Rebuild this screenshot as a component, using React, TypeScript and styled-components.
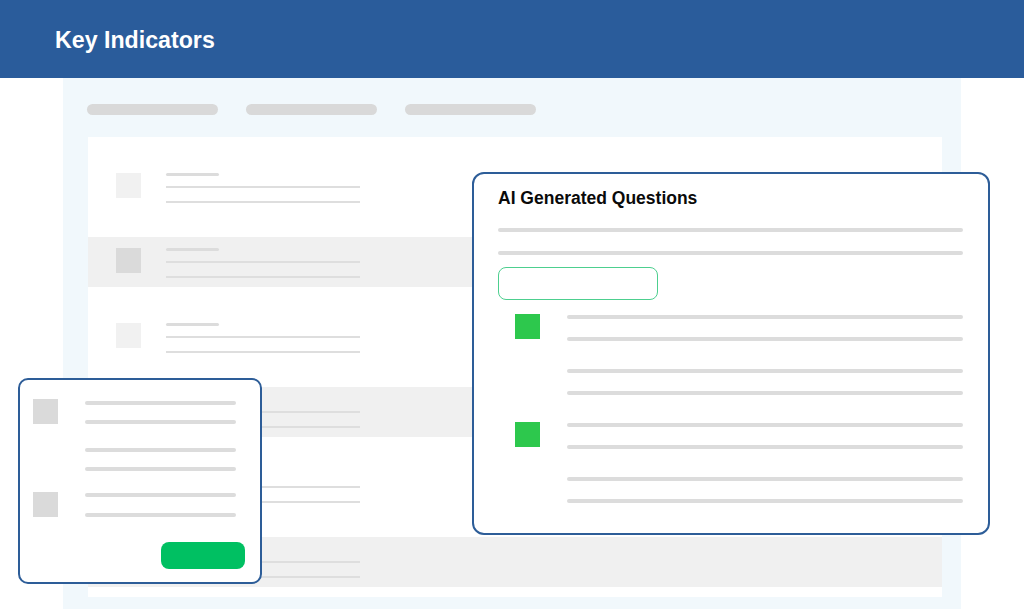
import React from "react";
import styled, { createGlobalStyle } from "styled-components";

const GlobalStyle = createGlobalStyle`
  html, body { margin: 0; padding: 0; background: #ffffff; }
  body { font-family: "Liberation Sans", Arial, Helvetica, sans-serif; }
  * { box-sizing: border-box; }
`;

const Page = styled.div`
  position: relative;
  width: 1024px;
  height: 609px;
  overflow: hidden;
  background: #ffffff;
`;

const Header = styled.header`
  height: 78px;
  background: #2a5c9b;
  display: flex;
  align-items: center;
  padding-left: 55px;
`;

const Title = styled.h1`
  margin: 0;
  color: #ffffff;
  font-size: 23.2px;
  font-weight: 700;
  line-height: 28px;
  padding-top: 1px;
`;

const Main = styled.main`
  display: flex;
  padding-left: 63px;
`;

const Panel = styled.section`
  width: 898px;
  height: 531px;
  background: #f1f8fc;
  padding: 26px 19px 0 24px;
  display: flex;
  flex-direction: column;
`;

const Tabs = styled.div`
  display: flex;
  gap: 28px;
  height: 11px;
`;

const TabBar = styled.div`
  width: 131px;
  height: 11px;
  border-radius: 6px;
  background: #d9d9d9;
`;

const Table = styled.div`
  margin-top: 22px;
  margin-left: 1px;
  background: #ffffff;
  padding-bottom: 10px;
  display: flex;
  flex-direction: column;
`;

const Row = styled.div<{ $shaded?: boolean }>`
  height: ${(p) => (p.$shaded ? 50 : 100)}px;
  background: ${(p) => (p.$shaded ? "#f0f0f0" : "#ffffff")};
  display: flex;
  align-items: center;
  padding-left: 28px;
  gap: 25px;
`;

const RowSquare = styled.div<{ $shaded?: boolean }>`
  width: 25px;
  height: 25px;
  background: ${(p) => (p.$shaded ? "#dadada" : "#f1f1f1")};
  margin-top: -3px;
`;

const RowText = styled.div`
  display: flex;
  flex-direction: column;
  padding-top: 1px;
`;

const ShortBar = styled.div`
  width: 53px;
  height: 3px;
  border-radius: 2px;
  background: #dcdcdc;
`;

const ThinLine = styled.div<{ $gap: number }>`
  width: 194px;
  height: 2px;
  background: #dedede;
  margin-top: ${(p) => p.$gap}px;
`;

/* Overlay cards */

const SmallCard = styled.div`
  position: absolute;
  left: 18px;
  top: 378px;
  width: 244px;
  height: 206px;
  background: #ffffff;
  border: 2px solid #2d5d98;
  border-radius: 10px;
  padding: 21px 15px 0 13px;
  display: flex;
  flex-direction: column;
`;

const Group = styled.div<{ $mt?: number }>`
  display: flex;
  align-items: flex-start;
  gap: 27px;
  margin-top: ${(p) => p.$mt ?? 0}px;
`;

const GraySquare = styled.div<{ $mt?: number }>`
  width: 25px;
  height: 25px;
  background: #dadada;
  margin-top: ${(p) => p.$mt ?? 0}px;
  flex-shrink: 0;
`;

const Spacer = styled.div`
  width: 25px;
  flex-shrink: 0;
`;

const LineStack = styled.div<{ $gap: number; $width?: number }>`
  display: flex;
  flex-direction: column;
  gap: ${(p) => p.$gap}px;
  width: ${(p) => (p.$width ? `${p.$width}px` : "auto")};
  flex: ${(p) => (p.$width ? "none" : "1")};
`;

const Bar = styled.div`
  height: 4px;
  border-radius: 2px;
  background: #dcdcdc;
`;

const ActionButton = styled.button`
  align-self: flex-end;
  margin-top: 25px;
  width: 84px;
  height: 27px;
  border: none;
  border-radius: 8px;
  background: #00c062;
  padding: 0;
`;

const AICard = styled.div`
  position: absolute;
  left: 472px;
  top: 172px;
  width: 518px;
  height: 363px;
  background: #ffffff;
  border: 2px solid #2d5d98;
  border-radius: 12px;
  padding: 14px 25px 0 24px;
  display: flex;
  flex-direction: column;
`;

const CardTitle = styled.h2`
  margin: 0;
  font-size: 17.5px;
  line-height: 20px;
  font-weight: 700;
  color: #0a0a0a;
`;

const Intro = styled.div`
  margin-top: 20px;
  display: flex;
  flex-direction: column;
  gap: 19px;
`;

const OutlineBox = styled.div`
  margin-top: 12px;
  width: 160px;
  height: 33px;
  border: 1.5px solid #4dcf8f;
  border-radius: 8px;
`;

const Questions = styled.div`
  margin-top: 15px;
  display: flex;
  flex-direction: column;
  gap: 28px;
`;

const Question = styled.div`
  display: flex;
  align-items: flex-start;
  padding-left: 17px;
  gap: 27px;
`;

const GreenSquare = styled.div`
  width: 25px;
  height: 25px;
  background: #2dc84d;
  margin-top: -1px;
  flex-shrink: 0;
`;

const rows = [false, true, false, true, false, true];

export default function App() {
  return (
    <>
      <GlobalStyle />
      <Page>
        <Header>
          <Title>Key Indicators</Title>
        </Header>
        <Main>
          <Panel>
            <Tabs>
              <TabBar />
              <TabBar />
              <TabBar />
            </Tabs>
            <Table>
              {rows.map((shaded, i) => (
                <Row key={i} $shaded={shaded}>
                  <RowSquare $shaded={shaded} />
                  <RowText>
                    <ShortBar />
                    <ThinLine $gap={10} />
                    <ThinLine $gap={13} />
                  </RowText>
                </Row>
              ))}
            </Table>
          </Panel>
        </Main>

        <SmallCard>
          <Group>
            <GraySquare $mt={-2} />
            <LineStack $gap={15} $width={151}>
              <Bar />
              <Bar />
            </LineStack>
          </Group>
          <Group $mt={24}>
            <Spacer />
            <LineStack $gap={15} $width={151}>
              <Bar />
              <Bar />
            </LineStack>
          </Group>
          <Group $mt={22}>
            <GraySquare $mt={-1} />
            <LineStack $gap={16} $width={151}>
              <Bar />
              <Bar />
            </LineStack>
          </Group>
          <ActionButton aria-label="Submit" />
        </SmallCard>

        <AICard>
          <CardTitle>AI Generated Questions</CardTitle>
          <Intro>
            <Bar />
            <Bar />
          </Intro>
          <OutlineBox />
          <Questions>
            {[true, false, true, false].map((checked, i) => (
              <Question key={i}>
                {checked ? <GreenSquare /> : <Spacer />}
                <LineStack $gap={18}>
                  <Bar />
                  <Bar />
                </LineStack>
              </Question>
            ))}
          </Questions>
        </AICard>
      </Page>
    </>
  );
}
